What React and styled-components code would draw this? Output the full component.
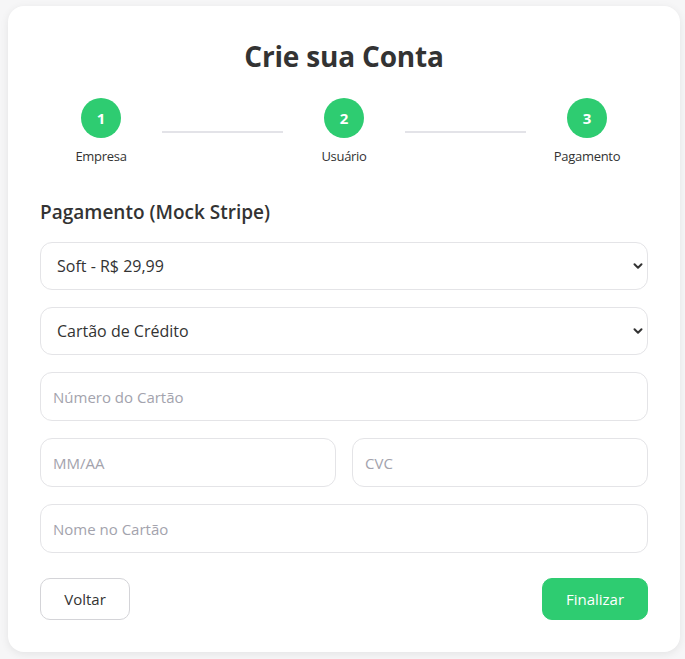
import React from "react";
import styled, { createGlobalStyle } from "styled-components";

const GlobalStyle = createGlobalStyle`
  html, body {
    margin: 0;
    padding: 0;
    background: #f6f6f7;
    font-family: "Open Sans", "Noto Sans", "Liberation Sans", sans-serif;
    color: #333;
  }
  * { box-sizing: border-box; }
`;

const Page = styled.div`
  padding: 6px 5px 7px 8px;
`;

const Card = styled.div`
  width: 672px;
  background: #fff;
  border-radius: 16px;
  box-shadow: 0 2px 8px rgba(0, 0, 0, 0.08);
  padding: 32px 32px 32px;
`;

const Title = styled.h1`
  margin: 0 0 23px;
  text-align: center;
  font-size: 28px;
  line-height: 37px;
  font-weight: 700;
  color: #333;
  letter-spacing: -0.2px;
`;

const Stepper = styled.div`
  display: flex;
  align-items: center;
  padding: 0 11px;
  margin-bottom: 35px;
`;

const Step = styled.div`
  width: 100px;
  display: flex;
  flex-direction: column;
  align-items: center;
  gap: 10px;
`;

const Circle = styled.div`
  width: 40px;
  height: 40px;
  border-radius: 50%;
  background: ${(p) => (p.$active ? "#2ecc71" : "#e5e5ea")};
  color: #fff;
  font-weight: 700;
  font-size: 15px;
  display: flex;
  align-items: center;
  justify-content: center;
`;

const StepLabel = styled.span`
  font-size: 13px;
  line-height: 17px;
  color: #333;
  letter-spacing: -0.3px;
`;

const Connector = styled.div`
  flex: 1;
  height: 2px;
  margin: 0 11px;
  background: #e3e3e8;
`;

const SectionTitle = styled.h2`
  margin: 0 0 18px;
  font-size: 19px;
  line-height: 24px;
  font-weight: 600;
  color: #333;
`;

const Form = styled.div`
  display: flex;
  flex-direction: column;
  gap: 17px;
`;

const Row = styled.div`
  display: grid;
  grid-template-columns: 1fr 1fr;
  gap: 16px;
`;

const SelectWrap = styled.div`
  position: relative;
`;

const fieldBase = `
  width: 100%;
  border: 1px solid #e4e4e7;
  border-radius: 12px;
  background: #fff;
  padding: 0 16px;
  font-family: "Open Sans", "Noto Sans", "Liberation Sans", sans-serif;
  font-size: 15px;
  color: #333;
  outline: none;
`;

const Select = styled.select`
  ${fieldBase}
  height: 48px;
  font-size: 16px;
  appearance: none;
  -webkit-appearance: none;
`;

const Chevron = styled.svg`
  position: absolute;
  right: 0;
  top: 50%;
  transform: translateY(-50%);
  pointer-events: none;
`;

const Input = styled.input`
  ${fieldBase}
  height: 49px;
  padding-left: 12px;
  &::placeholder {
    color: #a3a3ad;
  }
`;

const Actions = styled.div`
  display: flex;
  justify-content: space-between;
  margin-top: 25px;
`;

const Button = styled.button`
  height: 42px;
  padding: 0 20px;
  min-width: ${(p) => (p.$primary ? "106px" : "90px")};
  border-radius: 10px;
  border: 1px solid ${(p) => (p.$primary ? "#2ecc71" : "#d4d4d8")};
  background: ${(p) => (p.$primary ? "#2ecc71" : "#fff")};
  color: ${(p) => (p.$primary ? "#fff" : "#333")};
  font-family: "Open Sans", "Noto Sans", "Liberation Sans", sans-serif;
  font-size: 15px;
  cursor: pointer;
`;

function SelectField({ children }) {
  return (
    <SelectWrap>
      <Select>{children}</Select>
      <Chevron width="20" height="20" viewBox="0 0 20 20" aria-hidden="true">
        <path d="M6.5 8.3 L10 11.8 L13.5 8.3" fill="none" stroke="#333" strokeWidth="2" strokeLinecap="round" strokeLinejoin="round" />
      </Chevron>
    </SelectWrap>
  );
}

export default function App() {
  const steps = ["Empresa", "Usuário", "Pagamento"];
  return (
    <>
      <GlobalStyle />
      <Page>
        <Card>
          <Title>Crie sua Conta</Title>
          <Stepper>
            {steps.map((s, i) => (
              <React.Fragment key={s}>
                {i > 0 && <Connector />}
                <Step>
                  <Circle $active>{i + 1}</Circle>
                  <StepLabel>{s}</StepLabel>
                </Step>
              </React.Fragment>
            ))}
          </Stepper>
          <SectionTitle>Pagamento (Mock Stripe)</SectionTitle>
          <Form>
            <SelectField>
              <option>Soft - R$ 29,99</option>
            </SelectField>
            <SelectField>
              <option>Cartão de Crédito</option>
            </SelectField>
            <Input placeholder="Número do Cartão" />
            <Row>
              <Input placeholder="MM/AA" />
              <Input placeholder="CVC" />
            </Row>
            <Input placeholder="Nome no Cartão" />
          </Form>
          <Actions>
            <Button>Voltar</Button>
            <Button $primary>Finalizar</Button>
          </Actions>
        </Card>
      </Page>
    </>
  );
}
